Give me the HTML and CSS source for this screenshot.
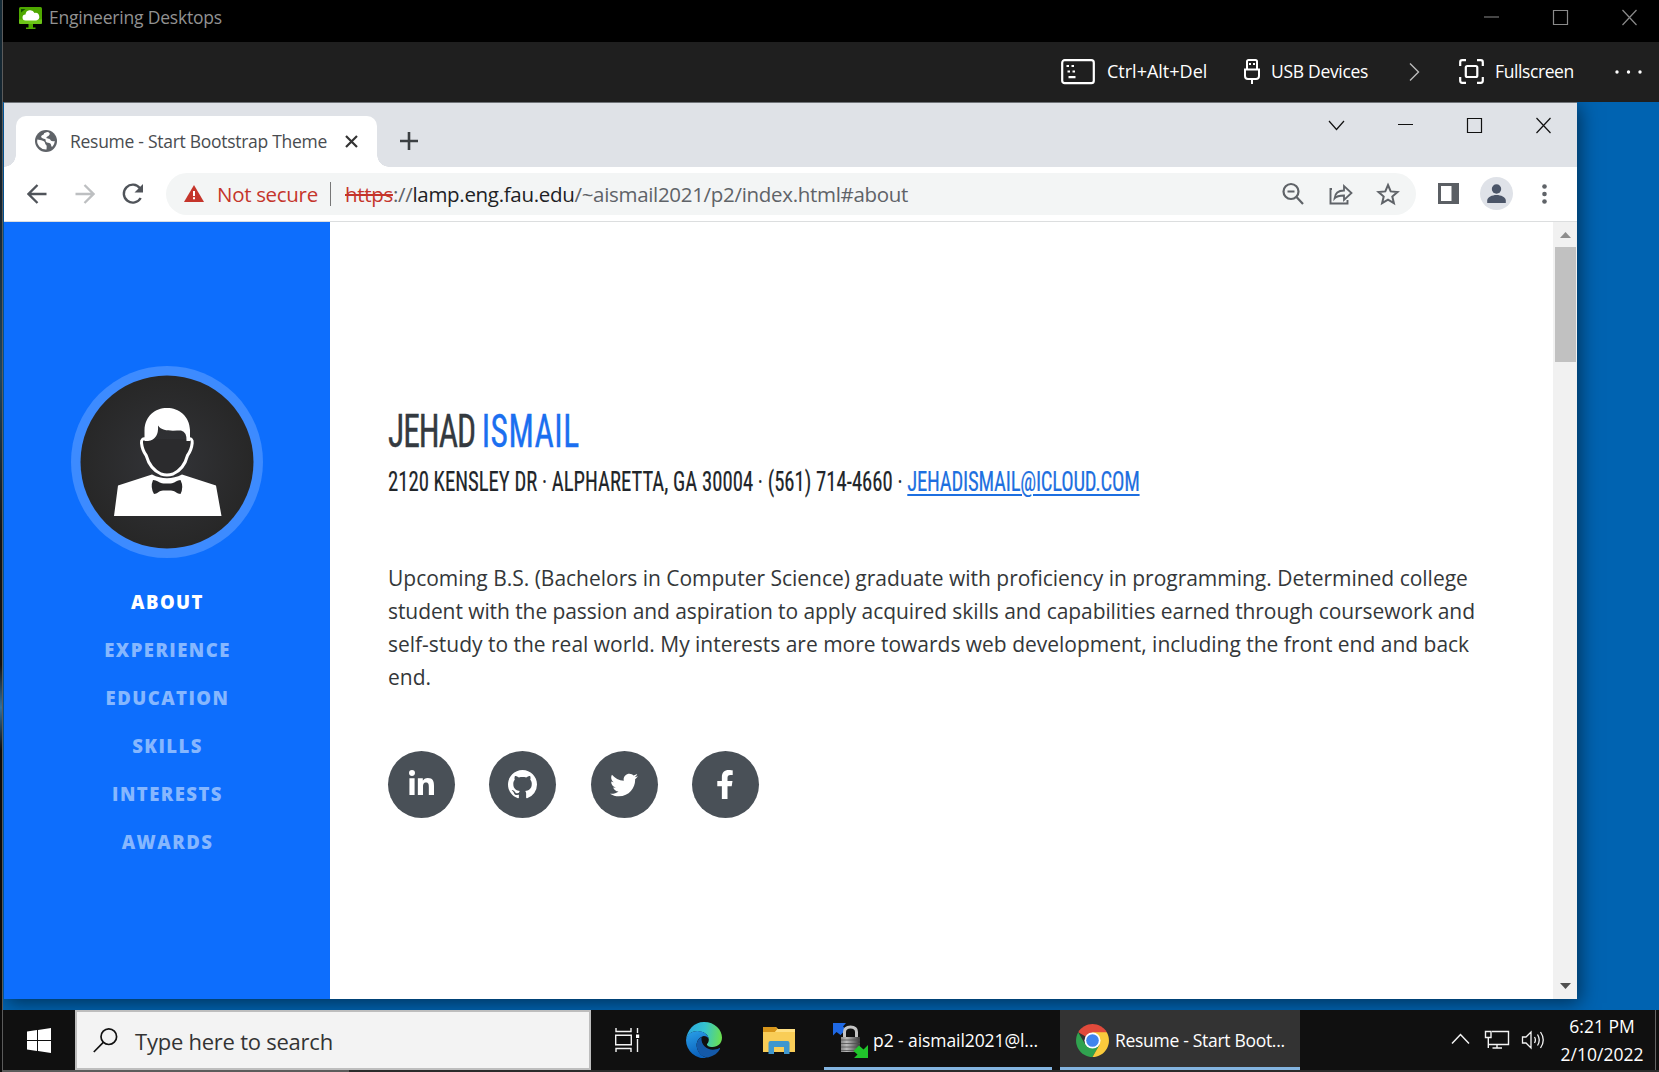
FILE: index.html
```html
<!DOCTYPE html>
<html lang="en">
<head>
<meta charset="utf-8">
<title>Engineering Desktops</title>
<link rel="stylesheet" href="styles.css">
</head>
<body>
<div class="screen">
  <div class="edge"></div>
  <div class="client">
    <header class="titlebar">
      <svg class="app-icon" width="23" height="23" viewBox="0 0 23 23"><rect width="23" height="17" rx="1.500" fill="#4fa800"/><path d="M0 12.500h23V15.500a1.500 1.500 0 0 1-1.500 1.500h-20A1.500 1.500 0 0 1 0 15.500z" fill="#6cc417"/><path d="M2 5.500V2h4.500z" fill="#145200"/><path d="M9.500 17h4.500v3.500h2.500V22H7v-1.500h2.500z" fill="#4fa800"/><path d="M6.500 13.500a3 3 0 0 1 0-6 4.700 4.700 0 0 1 9-1.500 3.800 3.800 0 0 1 1.800 7.500z" fill="#fff"/></svg>
      <span class="title">Engineering Desktops</span>
      <svg class="caps" width="155" height="18" viewBox="0 0 155 18" fill="none" stroke="#8a8a8a" stroke-width="1.200"><path d="M1 9h15M139.500 2l14 15m0-15l-14 15"/><path d="M70.500 2.500h14v14h-14z"/></svg>
    </header>
    <nav class="remote-bar">
      <svg width="34" height="26" viewBox="0 0 34 26" fill="none" stroke="#fff" stroke-width="2.200"><rect x="1.200" y="1.200" width="31.600" height="23" rx="2.500"/><path d="M5.500 7h2.500m2.500 0H13M6.500 12.500H9m2.500 0H14M7.500 18.200h7"/></svg>
      <span class="rb cad">Ctrl+Alt+Del</span>
      <svg class="usb" width="16" height="25" viewBox="0 0 16 25" fill="none" stroke="#fff" stroke-width="2"><path d="M3 10V2.500A1.500 1.500 0 0 1 4.500 1h7A1.500 1.500 0 0 1 13 2.500V10M1 10.500h14V17q0 3-3 3H4q-3 0-3-3zM8 20v5"/><path d="M5 5h2m2 0h2"/></svg>
      <span class="rb usbt">USB Devices</span>
      <svg class="more" width="11" height="20" viewBox="0 0 11 20" fill="none" stroke="#bbb" stroke-width="1.400"><path d="M1 1.500l8.500 8.500L1 18.500"/></svg>
      <svg class="fs" width="25" height="25" viewBox="0 0 25 25" fill="none" stroke="#fff" stroke-width="2.200"><path d="M1.200 7V3.200q0-2 2-2H7M18 1.200h3.800q2 0 2 2V7M23.800 18v3.800q0 2-2 2H18M7 23.800H3.200q-2 0-2-2V18"/><rect x="6.800" y="7" width="11.500" height="11" rx="1.500"/></svg>
      <span class="rb fst">Fullscreen</span>
      <svg class="dots" width="28" height="4" viewBox="0 0 28 4" fill="#fff"><circle cx="2" cy="2" r="1.700"/><circle cx="13.500" cy="2" r="1.700"/><circle cx="25" cy="2" r="1.700"/></svg>
    </nav>
    <main class="desktop">
      <section class="browser">
        <div class="tabs">
          <div class="tab">
            <svg width="22" height="22" viewBox="0 0 22 22"><circle cx="11" cy="11" r="11" fill="#5f6368"/><path d="M2.300 9.500l4 .8c2 .5 3.600 1 3.800 3 .1 1.400 1.800 1.700 1.600 3.300l-.2 3A8.800 8.800 0 0 1 2.300 9.500zM9 3.200q4-1.700 4.500-1c.8 1 1.500.6 1.100 2.200-.5 2-2.800 1.600-3.200 3-.3 1.200 3 .7 3.800 2.100.6 1.200 1.500 2.300 4.500 1.500-.2 3-1.200 4.500-2.700 6-1-.8-.8-2.600-1.700-3.400-1.200-1.200-3.300-.4-4.300-1.800-1-1.300.5-2.300-1.100-2.900-1.500-.5-3.500-.5-3.700-2.200C6 4.700 9.400 5.200 9 3.200z" fill="#fff"/></svg>
            <span class="tab-title">Resume - Start Bootstrap Theme</span>
            <svg class="tab-x" width="13" height="13" viewBox="0 0 13 13" stroke="#333" stroke-width="2.200"><path d="M1 1l11 11M12 1L1 12"/></svg>
          </div>
          <svg class="plus" width="18" height="18" viewBox="0 0 18 18" stroke="#3c4043" stroke-width="2.600"><path d="M9 0v18M0 9h18"/></svg>
          <svg class="win" width="224" height="17" viewBox="0 0 224 17" fill="none" stroke="#111" stroke-width="1.200"><path d="M1 4l7.500 8.500L16 4M70 7.500h15M208.500 1l14 15m0-15l-14 15"/><path d="M139.500 1.500h14v14h-14z"/></svg>
        </div>
        <div class="toolbar">
          <svg class="back" width="20" height="20" viewBox="0 0 20 20" fill="none" stroke="#50545a" stroke-width="2.300"><path d="M19.500 10H2M10.500 1l-9 9 9 9"/></svg>
          <svg class="fwd" width="20" height="20" viewBox="0 0 20 20" fill="none" stroke="#bdbfc1" stroke-width="2.300"><path d="M.5 10H18M9.500 1l9 9-9 9"/></svg>
          <svg class="reload" width="22" height="22" viewBox="0 0 22 22"><path d="M18.700 15A9 9 0 1 1 18 5.200" fill="none" stroke="#50545a" stroke-width="2.400"/><path d="M21 1v8.500h-8.500z" fill="#50545a"/></svg>
          <div class="omnibox">
            <svg class="warn" width="20" height="17" viewBox="0 0 20 17"><path d="M10 0l10 17H0z" fill="#c5352b"/><path d="M9 6h2v5H9zm0 6.300h2v2H9z" fill="#fff"/></svg>
            <span class="insecure">Not secure</span>
            <span class="sep"></span>
            <span class="url"><s>https</s>://<b>lamp.eng.fau.edu</b>/~aismail2021/p2/index.html#about</span>
            <svg class="oi" width="118" height="24" viewBox="0 0 118 24" fill="none" stroke="#5f6368" stroke-width="2.200"><circle cx="9" cy="9.500" r="7.500"/><path d="M14.500 15l6.500 7M5.500 9.500h7"/><path d="M50 7h-1.500v14.500h17V18" stroke-width="1.900"/><path d="M52.500 16.500c.5-5 3.500-8 9.500-8V4l7.500 7-7.500 7v-4.500c-4 0-7 0-9.500 3z" stroke-width="1.800"/><path d="M106 3l2.700 6.400 6.800.6-5.200 4.500 1.600 6.700-5.900-3.500-5.900 3.500 1.600-6.700-5.200-4.500 6.800-.6z" stroke-width="2"/></svg>
          </div>
          <svg class="panel" width="21" height="21" viewBox="0 0 21 21"><path d="M0 0h21v21H0zM3 3v15h10.500V3z" fill="#5b5f64" fill-rule="evenodd"/></svg>
          <svg class="user" width="33" height="33" viewBox="0 0 33 33"><circle cx="16.500" cy="16.500" r="16.500" fill="#dfe2e8"/><circle cx="16.500" cy="12" r="4.700" fill="#4b5568"/><path d="M7.200 26v-2.500c0-3.300 5-5.500 9.300-5.500s9.300 2.200 9.300 5.500V26z" fill="#4b5568"/></svg>
          <svg class="kebab" width="5" height="20" viewBox="0 0 5 20" fill="#5f6368"><circle cx="2.500" cy="2.500" r="2.300"/><circle cx="2.500" cy="10" r="2.300"/><circle cx="2.500" cy="17.500" r="2.300"/></svg>
        </div>
        <div class="page">
          <aside class="sidebar">
            <svg class="avatar" width="192" height="192" viewBox="0 0 192 192"><defs><radialGradient id="av"><stop offset="0" stop-color="#333438"/><stop offset="1" stop-color="#272727"/></radialGradient></defs><circle cx="96" cy="96" r="96" fill="#3d8bff"/><circle cx="96" cy="96" r="86.500" fill="url(#av)"/><path d="M43 150l4-30.500L81 108.500q15 7.500 30 0l34 11L150.500 150z" fill="#fff"/><path d="M75 73q-5-1-4.500 4 .7 7 4.700 12.500Q79 103 90 108q6 2 12 0 11-5 14.500-18.500 4-5.500 4.700-12.500.5-5-4-4" fill="#2b2b2d" stroke="#fff" stroke-width="3"/><path d="M73.500 75V64C74 50 84 42 96 42s22.500 8 23 22v11l-3.500 0q.5-9-5.500-10.500c-8 0-19 1.500-23-5q1 14-10 15.500z" fill="#fff"/><path d="M82 114c4 0 6 3 10.500 3.500h7C104 117 106 114 109.500 114q3.500 7 0 14c-3 0-6-3.500-9.500-3.500h-8c-3.500 0-6 3.500-9 3.500q-4-7-1-14z" fill="#28282a"/></svg>
            <a class="active">ABOUT</a><a>EXPERIENCE</a><a>EDUCATION</a><a>SKILLS</a><a>INTERESTS</a><a>AWARDS</a>
          </aside>
          <article class="resume">
            <h1>JEHAD <span>ISMAIL</span></h1>
            <div class="contact">2120 KENSLEY DR · ALPHARETTA, GA 30004 · (561) 714-4660 · <span class="mail">JEHADISMAIL@ICLOUD.COM</span></div>
            <p>Upcoming B.S. (Bachelors in Computer Science) graduate with proficiency in programming. Determined college<br><span class="tight">student with the passion and aspiration to apply acquired skills and capabilities earned through coursework and</span><br>self-study to the real world. My interests are more towards web development, including the front end and back<br>end.</p>
            <div class="social">
              <i><svg class="li" width="25" height="25" viewBox="0 0 448 448"><path d="M100.280 448H7.400V148.900h92.880zM53.790 108.100C24.090 108.100 0 83.500 0 53.800a53.790 53.790 0 0 1 107.580 0c0 29.700-24.100 54.300-53.790 54.300zM447.900 448h-92.680V302.400c0-34.700-.7-79.200-48.290-79.200-48.290 0-55.690 37.700-55.690 76.700V448h-92.780V148.900h89.080v40.800h1.300c12.400-23.500 42.690-48.300 87.880-48.300 94 0 111.280 61.900 111.280 142.300V448z"/></svg></i>
              <i><svg width="29" height="29" viewBox="0 0 16 16"><path d="M8 0C3.580 0 0 3.580 0 8c0 3.540 2.290 6.530 5.470 7.590.4.070.55-.17.55-.38 0-.19-.01-.82-.01-1.490-2.010.37-2.530-.49-2.690-.94-.09-.23-.48-.94-.82-1.130-.28-.15-.68-.52-.01-.53.63-.01 1.080.58 1.230.82.72 1.210 1.870.87 2.330.66.070-.52.28-.87.51-1.070-1.780-.2-3.640-.89-3.640-3.950 0-.87.31-1.590.82-2.150-.08-.2-.36-1.020.08-2.120 0 0 .67-.21 2.200.82.640-.18 1.320-.27 2-.27.68 0 1.360.09 2 .27 1.530-1.040 2.200-.82 2.200-.82.440 1.100.16 1.920.08 2.120.51.56.82 1.270.82 2.150 0 3.070-1.870 3.750-3.650 3.950.29.25.54.73.54 1.480 0 1.070-.01 1.930-.01 2.200 0 .21.15.46.55.38A8.010 8.010 0 0 0 16 8c0-4.420-3.580-8-8-8z"/></svg></i>
              <i><svg width="28" height="28" viewBox="0 0 512 512"><path d="M459.370 151.716c.325 4.548.325 9.097.325 13.645 0 138.720-105.583 298.558-298.558 298.558-59.452 0-114.680-17.219-161.137-47.106 8.447.974 16.568 1.299 25.340 1.299 49.055 0 94.213-16.568 130.274-44.832-46.132-.975-84.792-31.188-98.112-72.772 6.498.974 12.995 1.624 19.818 1.624 9.421 0 18.843-1.300 27.614-3.573-48.081-9.747-84.143-51.980-84.143-102.985v-1.299c13.969 7.797 30.214 12.670 47.431 13.319-28.264-18.843-46.781-51.005-46.781-87.391 0-19.492 5.197-37.360 14.294-52.954 51.655 63.675 129.300 105.258 216.365 109.807-1.624-7.797-2.599-15.918-2.599-24.040 0-57.828 46.782-104.934 104.934-104.934 30.213 0 57.502 12.670 76.670 33.137 23.715-4.548 46.456-13.320 66.599-25.340-7.798 24.366-24.366 44.833-46.132 57.827 21.117-2.273 41.584-8.122 60.426-16.243-14.292 20.791-32.161 39.308-52.628 54.253z"/></svg></i>
              <i><svg width="18" height="29" viewBox="0 0 320 512"><path d="M279.140 288l14.220-92.660h-88.910v-60.130c0-25.350 12.420-50.060 52.240-50.060h40.420V6.260S260.430 0 225.360 0c-73.220 0-121.080 44.380-121.080 124.720v70.620H22.890V288h81.390v224h100.170V288z"/></svg></i>
            </div>
          </article>
          <div class="scrollbar">
            <svg width="11" height="6" viewBox="0 0 11 6"><path d="M0 6l5.500-6L11 6z" fill="#8d8d8d"/></svg>
            <div class="thumb"></div>
            <svg class="down" width="11" height="6" viewBox="0 0 11 6"><path d="M0 0h11L5.500 6z" fill="#505050"/></svg>
          </div>
        </div>
      </section>
    </main>
    <footer class="taskbar">
      <div class="start"><svg width="24" height="25" viewBox="0 0 24 25" fill="#fff"><path d="M0 3.500l10-1.400V12H0zM11 2l13-1.900V12H11zM0 13h10v9.900L0 21.500zM11 13h13v11.900L11 23z"/></svg></div>
      <div class="search">
        <svg width="25" height="25" viewBox="0 0 25 25" fill="none" stroke="#111" stroke-width="1.700"><circle cx="15.800" cy="8.700" r="7.800"/><path d="M10.300 14.400L.8 24"/></svg>
        <span>Type here to search</span>
      </div>
      <svg class="taskview" width="25" height="24" viewBox="0 0 25 24" fill="none" stroke="#f4f4f4" stroke-width="1.400"><path d="M1 0v3.500h15V0M1 24v-3.500h15V24M.7 7.200h15.600v9.600H.7zM22.500 0v5m0 6v13"/><path d="M21 6.500h3.200v3.500H21z" fill="#fff" stroke="none"/></svg>
      <svg class="edgeicon" width="36" height="36" viewBox="0 0 36 36"><defs><linearGradient id="e1" x1="0" y1=".4" x2="1" y2=".5"><stop stop-color="#2aa7df"/><stop offset=".5" stop-color="#35c3d0"/><stop offset="1" stop-color="#6be04f"/></linearGradient><linearGradient id="e2" x1="0" y1="0" x2=".3" y2="1"><stop stop-color="#2aa0e8"/><stop offset="1" stop-color="#0b62bd"/></linearGradient></defs><path d="M0 18C1 8 8 0 18 0c11 0 18 8 18 15.500 0 6-4.500 9.500-9.500 9.500-4 0-6-1.500-5.500-3 1-1 1.800-2.500 1.800-4.500C22.800 12.500 17 9 11.500 9 5 9 1 13 0 18z" fill="url(#e1)"/><path d="M0 18c1-5.500 5-9 11.500-9 5.500 0 11 3.500 11.300 8-.8-2-2.800-3-5-3-5 1-8 6-7 11 1 5.500 5 9.500 10.200 10.800A18 18 0 0 1 0 18z" fill="url(#e2)"/><path d="M15.500 15C11 17.500 10 22 11 26c1.500 6 6 9.500 11 9.500 6-1.500 10-4.500 12-8.500.3-.8-.4-1.200-1-.8-8 4-18.500-.5-17.500-11.200z" fill="#1459a8"/></svg>
      <svg class="folder" width="32" height="27" viewBox="0 0 32 27"><path d="M0 0h13l2 2h17v23H0z" fill="#f9cd57"/><path d="M0 0h12.500l2 2-2.500 3H0z" fill="#d8961a"/><path d="M0 5h12l2.500-3H32v3z" fill="#ffe083"/><path d="M5.500 27V16q0-2 2-2h17q2 0 2 2v11H21v-7H11v7z" fill="#3f97cf"/><path d="M11 20h10v5H11z" fill="#f9cd57"/></svg>
      <div class="task putty">
        <svg width="35" height="35" viewBox="0 0 35 35"><defs><linearGradient id="lk"><stop stop-color="#888"/><stop offset=".3" stop-color="#bbb"/><stop offset="1" stop-color="#383838"/></linearGradient></defs><path d="M0 0h13l-3 3.500 3 3L7.500 12l-4-3L0 12.500z" fill="#1f69e5"/><path d="M11.500 15V9q0-5 6-5t6 5v6" fill="none" stroke="#c4c4c4" stroke-width="3"/><path d="M8 14h19v15H8z" fill="url(#lk)"/><path d="M8 17h19M8 20.500h19M8 24h19M8 27.500h19" stroke="#505050" stroke-width=".8"/><path d="M35 35H21l3.500-3.500-4-3.500 5.500-5.500 4.500 4L35 22z" fill="#20c52b"/></svg>
        <span>p2 - aismail2021@l...</span>
      </div>
      <div class="task chrome">
        <svg width="33" height="33" viewBox="0 0 34 34"><path d="M17 17L2.300 8.500A17 17 0 0 1 31.700 8.500z" fill="#e14a3b"/><path d="M2.300 8.500A17 17 0 0 0 17 34l7.400-12.800L17 17l-7.400 4.200z" fill="#30a24f"/><path d="M17 34l7.400-12.800L17 17v-8.500h14.700A17 17 0 0 1 17 34z" fill="#fbcb3c"/><circle cx="17" cy="17" r="8.300" fill="#fff"/><circle cx="17" cy="17" r="6.500" fill="#4084ee"/></svg>
        <span>Resume - Start Boot...</span>
      </div>
      <svg class="tray" width="94" height="22" viewBox="0 0 94 22" fill="none" stroke="#f4f4f4" stroke-width="1.500"><path d="M1 14.500l8.500-9 8.500 9"/><path d="M41 2.500h16.500V15.500H38M46 15.500V19m-4.500 0h9.500M34.500 2.500h5.500v6h-5.500zM37.300 8.500V19" stroke-width="1.400"/><path d="M71.500 8h3.500l5-5v16l-5-5h-3.500zM83.500 8q1.800 3 0 6M86.500 5.500q3.500 5.500 0 11M89.500 3q5.500 8 0 16" stroke-width="1.300"/></svg>
      <div class="clock"><span>6:21 PM</span><span>2/10/2022</span></div>
      <div class="peek"></div>
    </footer>
    <div class="bottom"></div>
  </div>
</div>
</body>
</html>
```
FILE: styles.css
```css
* { box-sizing: border-box; }
body { margin: 0; font-family: "Open Sans", "Noto Sans", sans-serif; overflow: hidden; }
svg { display: block; flex: none; }
span { white-space: nowrap; }
.screen { display: flex; width: 1659px; height: 1072px; background: #000; }
.edge { width: 3px; flex: none; background: linear-gradient(#142a36, #16222c 18%, #1c4560 35%, #101418 50%, #111 62%, #2f6fa0 66%, #0b0b0b 70%); border-right: 1px solid #5b5b5b; }
.client { flex: 1; display: grid; grid-template-rows: 42px 60px 908px 60px 2px; }

.titlebar { display: flex; background: #000; padding: 7px 21px 0 16px; }
.title { margin: -2px 0 0 7px; font-size: 17.500px; letter-spacing: -.2px; line-height: 24px; color: #929292; }
.caps { margin: 1px 0 0 auto; }

.remote-bar { display: flex; align-items: center; background: #1f1f1f; color: #fff; padding: 0 0 1px 1058px; font-size: 17.500px; }
.rb { flex: none; line-height: 24px; margin-top: -2px; letter-spacing: -.3px; }
.cad { width: 104px; margin-left: 12px; font-size: 18px; letter-spacing: 0; }
.usb { margin-left: 33px; }
.usbt { width: 98px; margin-left: 11px; }
.more { margin-left: 40px; }
.fs { margin-left: 39px; }
.fst { width: 80px; margin-left: 11px; letter-spacing: -.4px; }
.dots { margin-left: 40px; }

.desktop { background: #0063b1; padding-left: 1px; overflow: hidden; }
.browser { width: 1573px; height: 897px; border-top: 1px solid #707478; background: #fff; box-shadow: 3px 4px 18px rgba(0, 0, 0, .5); display: grid; grid-template-rows: 64px 55px 777px; }
.tabs { display: flex; background: #dfe2e7; padding-left: 12px; }
.tab { position: relative; display: flex; align-items: center; width: 361px; height: 51px; margin-top: 13px; padding: 0 0 1px 19px; background: #fff; border-radius: 10px 10px 0 0; }
.tab::before, .tab::after { content: ""; position: absolute; bottom: 0; width: 12px; height: 12px; }
.tab::before { left: -12px; background: radial-gradient(circle at 0 0, transparent 11.500px, #fff 12px); }
.tab::after { right: -12px; background: radial-gradient(circle at 100% 0, transparent 11.500px, #fff 12px); }
.tab-title { width: 260px; margin: -1px 0 0 13px; font-size: 17.500px; letter-spacing: -.28px; color: #494c50; }
.tab-x { margin-left: 15px; }
.plus { margin: 29px 0 0 23px; }
.win { margin: 14px 25px 0 auto; }
.toolbar { display: flex; align-items: center; border-bottom: 1px solid #dcdedf; padding: 0 0 1px 23px; }
.fwd { margin-left: 28px; }
.reload { margin-left: 27px; }
.omnibox { display: flex; align-items: center; width: 1250px; height: 42px; margin-left: 22px; padding-left: 18px; border-radius: 21px; background: #f3f5f5; font-size: 20.500px; letter-spacing: -.31px; color: #5f6368; }
.insecure { width: 100px; margin-left: 13px; color: #c5352b; }
.sep { width: 1px; height: 24px; margin: 0 14px 0 13px; background: #777; }
.url b { font-weight: 400; color: #202124; }
.url s { color: #c5352b; }
.oi { margin: 0 16px 0 auto; }
.panel { margin-left: 22px; }
.user { margin-left: 21px; }
.kebab { margin-left: 29px; }

.page { display: grid; grid-template-columns: 326px 1223px 24px; }
.sidebar { display: flex; flex-direction: column; align-items: center; background: #0d6efd; padding-top: 144px; }
.avatar { margin-bottom: 20px; }
.sidebar a { height: 48px; line-height: 48px; padding-left: 1px; font-size: 18.500px; font-weight: 800; letter-spacing: 1.450px; color: #86b7fe; }
.sidebar .active { color: #fff; }
.resume { padding: 176px 0 0 58px; background: #fff; }
h1, .contact { margin: 0; font-family: Roboto, sans-serif; font-stretch: 75%; font-weight: 400; transform: scaleX(.722); transform-origin: 0 0; white-space: nowrap; }
h1 { font-size: 46.500px; line-height: 66px; letter-spacing: -1.500px; color: #343a40; -webkit-text-stroke: .4px; }
h1 span { letter-spacing: .6px; color: #1b6ff0; }
.contact { transform: scaleX(.739); font-size: 28px; line-height: 36px; color: #212529; -webkit-text-stroke: .2px; }
.mail { letter-spacing: -.34px; color: #1d6fe0; text-decoration: underline; text-underline-offset: 3px; text-decoration-thickness: 2px; }
.resume p { margin: 62px 0 0; font-size: 21px; letter-spacing: -.015px; line-height: 33px; color: #343739; white-space: nowrap; }
.tight { letter-spacing: -.08px; }
.social { display: flex; gap: 34.300px; margin-top: 57px; }
.social i { display: flex; align-items: center; justify-content: center; width: 67px; height: 67px; border-radius: 50%; background: #495057; }
.social svg { fill: #fff; }
.li { margin-bottom: 4px; }
.scrollbar { display: flex; flex-direction: column; align-items: center; background: #f1f1f1; padding: 10px 0 10px 1px; }
.thumb { width: 21px; height: 115px; margin-top: 9px; background: #c1c1c1; }
.down { margin-top: auto; }

.taskbar { display: flex; align-items: center; background: #101010; color: #fff; }
.start { width: 72px; padding-left: 24px; }
.search { display: flex; align-items: center; width: 516px; height: 60px; padding-left: 16px; border: 2px solid #bdbdbd; background: #f3f3f3; color: #333; font-size: 22px; letter-spacing: -.24px; }
.search span { margin: 2px 0 0 17px; }
.taskview { margin-left: 24px; }
.edgeicon { margin-left: 46px; }
.folder { margin-left: 41px; }
.task { display: flex; align-items: center; height: 60px; border-bottom: 3px solid #83b4e0; padding-top: 3px; font-size: 17.500px; }
.putty { width: 228px; margin-left: 29px; padding-left: 9px; }
.putty span { margin-left: 5px; letter-spacing: -.08px; }
.chrome { width: 240px; margin-left: 8px; padding-left: 16px; background: #333; }
.chrome span { margin-left: 6px; letter-spacing: -.3px; }
.tray { margin-left: 151px; }
.clock { display: flex; flex-direction: column; align-items: center; width: 90px; margin: 0 0 0 12px; font-size: 17.500px; line-height: 28px; }
.peek { width: 1px; height: 60px; margin-left: 8px; background: #666; }
.bottom { background: linear-gradient(90deg, #5c5c5c 346px, #2b2b2b 346px); }
```
